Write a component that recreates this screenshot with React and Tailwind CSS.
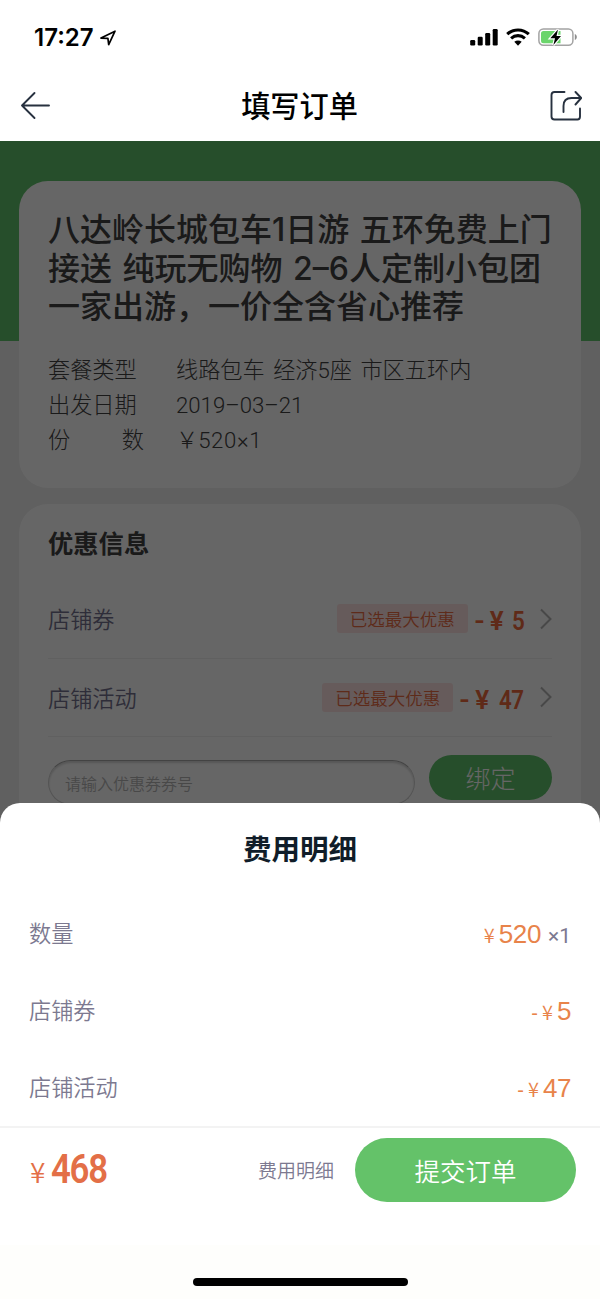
import React from "react";

const LATIN = "font-['Roboto','Noto_Sans_CJK_SC',sans-serif]";

function StatusBar() {
  return (
    <div className="flex h-[72px] items-start justify-between pt-[25px] pl-[34px] pr-[22px] text-black">
      <div className="flex items-center gap-[4px]">
        <span className="w-[61px] whitespace-nowrap font-['Inter',sans-serif] text-[24px] font-semibold leading-6 pt-px">17:27</span>
        <svg className="h-[18px] w-[18px]" viewBox="0 0 18 18" fill="none" stroke="currentColor" strokeWidth="1.7" strokeLinejoin="round">
          <path d="M2 9.1 16 2.200 9.700 15.600 8.900 9.300Z" />
        </svg>
      </div>
      <div className="flex h-6 items-center gap-[8px]">
        <svg className="h-[18px] w-[28px]" viewBox="0 0 28 18" fill="currentColor">
          <rect x="0.2" y="12" width="5" height="5.5" rx="1.2" />
          <rect x="7.7" y="8.8" width="5" height="8.7" rx="1.2" />
          <rect x="15.2" y="5" width="5" height="12.5" rx="1.2" />
          <rect x="22.7" y="1" width="5" height="16.5" rx="1.2" />
        </svg>
        <svg className="h-[18px] w-6" viewBox="0 0 24 18" fill="none" stroke="currentColor" strokeWidth="3.1">
          <path d="M1.2 6.2C7.2.5 16.8.5 22.8 6.2" />
          <path d="M5.1 10.3C9.1 6.7 14.9 6.7 18.9 10.3" />
          <path d="M12 17.7 8.3 13.8C10.4 12.1 13.6 12.1 15.7 13.8Z" fill="currentColor" stroke="none" />
        </svg>
        <svg className="h-5 w-[40px]" viewBox="0 0 40 20">
          <rect x="0.9" y="1.9" width="34" height="16.4" rx="4.5" fill="none" stroke="#a3a3a3" strokeWidth="1.5" />
          <path d="M36.8 7v6c2.7-1.2 2.7-4.800 0-6Z" fill="#8d8d8d" />
          <path d="M5.5 4h17v12.3h-17a2.5 2.5 0 0 1-2.5-2.5V6.500A2.500 2.500 0 0 1 5.500 4Z" fill="#6bd56c" />
          <path d="M20 2.500 12.300 11.300H17L15.400 18 23 9H18.500Z" fill="#000" stroke="#fff" strokeWidth="2.400" paintOrder="stroke" />
        </svg>
      </div>
    </div>
  );
}

function NavBar() {
  return (
    <div className="flex h-[69px] items-center justify-between pb-px pl-5 pr-[18px] text-[#27313f]">
      <svg className="h-8 w-8" viewBox="0 0 32 32" fill="none" stroke="currentColor" strokeWidth="1.9" strokeLinecap="round" strokeLinejoin="round">
        <path d="M29 15.500H2M14.500 3 2 15.500 14.500 28" />
      </svg>
      <h1 className="-mt-1 mr-[3px] text-[29.200px] font-medium leading-10 text-black">填写订单</h1>
      <svg className="h-8 w-8" viewBox="0 0 32 32" fill="none" stroke="currentColor" strokeWidth="1.900" strokeLinecap="round" strokeLinejoin="round">
        <path d="M14.500 2H4.500Q1.500 2 1.500 5V26.500Q1.500 29.500 4.500 29.500H27.500Q30 29.500 30 26.500V18.500" />
        <path d="M13.500 22V16Q13.500 8 21.500 8H31M25.500 2 31.200 8 25.500 14.500" />
      </svg>
    </div>
  );
}

function OrderRow({ label, children }) {
  return (
    <div className="flex h-[35px] items-center whitespace-pre leading-[35px]">
      <div className="w-32">{label}</div>
      <div className="[word-spacing:3px]">{children}</div>
    </div>
  );
}

function CouponRow({ label, amount }) {
  return (
    <div className="flex h-[78.500px] items-center justify-between border-b border-[#f0f0f0]">
      <div className="text-[22.200px] font-[350] text-[#74718e]">{label}</div>
      <div className="flex items-center">
        <div className="mr-[7px] h-[29px] rounded-[3px] bg-[#ffe4e4] px-[13px] text-[17.500px] font-[350] leading-[29px] text-[#ea6c43]">已选最大优惠</div>
        <div className={`mt-[5px] flex items-center text-[26px] font-semibold leading-[30px] text-[#ee6a3c] ${LATIN}`}>
          <span className="w-[15px] scale-x-110">-</span>
          <span className="w-[20px]">¥</span>
          <span className="origin-right scale-x-[.86] tracking-[-0.500px]">{amount}</span>
        </div>
        <svg className="ml-[16px] h-6 w-3" viewBox="0 0 12 24" fill="none" stroke="#b4b4b4" strokeWidth="2">
          <path d="M1 2.500 10.500 12 1 21.500" />
        </svg>
      </div>
    </div>
  );
}

function FeeRow({ label, minus, amount, suffix }) {
  return (
    <div className="flex h-[77px] items-center justify-between">
      <div className="-mt-[2px] text-[22.200px] font-[350] text-[#7c7990]">{label}</div>
      <div className="mt-px flex items-baseline font-['Liberation_Sans','Noto_Sans_CJK_SC',sans-serif] text-[#e8834a]">
        {minus && <span className="mr-[4px] text-[20px]">-</span>}
        <span className="mr-[4px] text-[20px] font-[350] font-['Noto_Sans_CJK_SC']">¥</span>
        <span className="text-[26px] tracking-[-0.400px]">{amount}</span>
        {suffix && <span className="ml-[7px] text-[21px] text-[#7c7990] font-['Roboto']">{suffix}</span>}
      </div>
    </div>
  );
}

export default function App() {
  return (
    <div className="flex h-[1299px] w-[600px] flex-col overflow-hidden bg-white font-['Noto_Sans_CJK_SC',sans-serif]">
      <StatusBar />
      <NavBar />
      <main className="relative h-[1158px] overflow-hidden bg-[#efefef]">
        <div className="h-[200px] bg-[#60c26b]" />
        <div className="-mt-40 flex flex-col gap-4 pl-[19px] pr-[19px]">
          <section className="h-[307px] rounded-[29px] bg-white pl-[29px] pt-[30px] text-[#424242]">
            <h2 className="whitespace-nowrap font-['Inter','Noto_Sans_CJK_SC',sans-serif] text-[32px] font-medium leading-[38.500px] [word-spacing:2px]">
              八达岭长城包车1日游 五环免费上门<br />
              接送 纯玩无购物 2–6人定制小包团<br />
              一家出游，一价全含省心推荐
            </h2>
            <div className={`mt-[26px] text-[22.200px] font-light ${LATIN}`}>
              <OrderRow label="套餐类型">线路包车 经济5座 市区五环内</OrderRow>
              <OrderRow label="出发日期">2019–03–21</OrderRow>
              <OrderRow label={<div className="flex w-24 justify-between"><span>份</span><span>数</span></div>}>￥<span className="tracking-[0.600px]">520×1</span></OrderRow>
            </div>
          </section>
          <section className="h-[500px] rounded-[29px] bg-white px-[29px] pt-[18px]">
            <h3 className="h-[58px] text-[25.300px] font-bold leading-[40px] text-[#424242]">优惠信息</h3>
            <CouponRow label="店铺券" amount="5" />
            <CouponRow label="店铺活动" amount="47" />
            <div className="flex items-start justify-between pt-[18px]">
              <div className="mt-[5px] h-[45px] w-[367px] rounded-full border border-[#d0d0d0] border-t-[#a8a8a8] pl-4 text-[16px] font-[350] leading-[44px] text-[#b5b5b5] shadow-[inset_0_2px_2px_#d8d8d8]">请输入优惠券券号</div>
              <div className="h-[45px] w-[123px] rounded-full bg-[#60c26b] text-center text-[25px] font-light leading-[45px] text-white">绑定</div>
            </div>
          </section>
        </div>
        <div className="absolute inset-0 flex flex-col justify-end bg-black/60">
          <div className="h-[496px] rounded-t-[20px] bg-white">
            <h2 className="h-[92px] pt-[25px] text-center text-[28.500px] font-bold leading-10 text-[#101d29]">费用明细</h2>
            <div className="h-[231px] px-[29px]">
              <FeeRow label="数量" amount="520" suffix="×1" />
              <FeeRow label="店铺券" minus amount="5" />
              <FeeRow label="店铺活动" minus amount="47" />
            </div>
            <div className="flex h-[86px] items-center border-t-2 border-[#f3f3f3] pl-[30px] pr-6">
              <div className="flex items-baseline text-[#e36f47]">
                <span className="text-[28px] font-[350] leading-10">¥</span>
                <span className="ml-[6px] origin-left scale-x-[.87] font-['Roboto',sans-serif] text-[40px] font-semibold leading-10 tracking-[-1.500px]">468</span>
              </div>
              <div className="ml-auto mr-px text-[19px] font-[350] text-[#7c7990]">费用明细</div>
              <div className="ml-5 h-16 w-[221px] rounded-full bg-[#64c269] text-center text-[25.500px] font-[350] leading-[64px] text-white">提交订单</div>
            </div>
            <div className="mt-[33px] flex h-[54px] justify-center bg-[#fefefc] pt-[33px]">
              <div className="h-2 w-[215px] rounded-full bg-black" />
            </div>
          </div>
        </div>
      </main>
    </div>
  );
}
